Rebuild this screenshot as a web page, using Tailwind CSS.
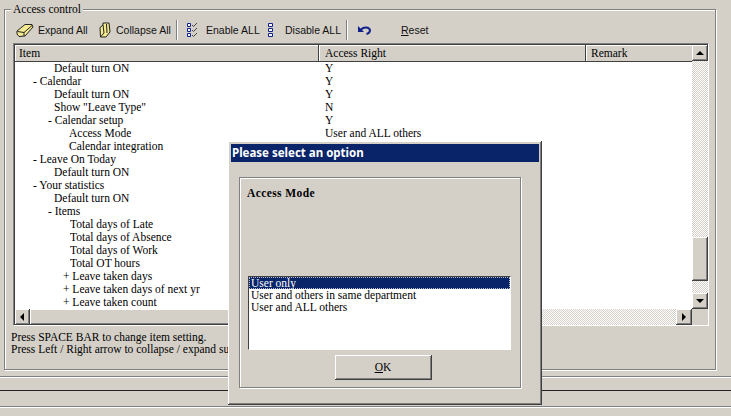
<!DOCTYPE html>
<html lang="en">
<head>
  <meta charset="UTF-8">
  <title>Access control</title>
  <script src="https://cdn.jsdelivr.net/npm/@tailwindcss/browser@4"></script>
</head>
<body class="bg-[#d4d0c8] text-black">
<div class="relative w-[731px] h-[416px] overflow-hidden font-['Liberation_Serif',serif] text-[11.5px] leading-[13px]">

  <!-- Access control group -->
  <div class="pt-[9px] pl-[4px] w-[716px]">
    <div class="relative h-[361px] border border-[#808080] shadow-[1px_1px_0_#fff,inset_1px_1px_0_#fff] pt-[10px] pl-[8px]">
      <span class="absolute left-[6px] -top-[7px] bg-[#d4d0c8] px-[2px]">Access control</span>

      <!-- Toolbar -->
      <div class="relative h-[20px] font-['Liberation_Sans',sans-serif] text-[10.5px] leading-[20px] text-[#111] whitespace-nowrap flex items-center">
        <svg class="ml-[3px] w-[18px] h-[15px]" viewBox="0 0 18 15">
          <path d="M1 8 L9 1.500 L16 1.500 L17 4 L9 13 L3 13.500 L1 11 Z" fill="#f4ea90" stroke="#222"/>
          <path d="M1.500 8.500 L8 9.500 L16 2.500 M8 9.500 L8 13" fill="none" stroke="#222"/>
        </svg>
        <span class="ml-[4px] w-[61px]">Expand All</span>
        <svg class="w-[12px] h-[16px]" viewBox="0 0 12 16">
          <path d="M1 5.500 L4 3 L4 1 L10 1 L11 10 L7 15 L1.500 15 Z" fill="#f4ea90" stroke="#222"/>
          <path d="M4 3 L5 11 L1.500 15 M7.500 2 L8 11" fill="none" stroke="#222"/>
        </svg>
        <span class="ml-[5px] w-[60px]">Collapse All</span>
        <div class="w-[1px] h-[20px] bg-[#808080] shadow-[1px_0_0_#fff]"></div>
        <svg class="ml-[10px] w-[11px] h-[15px]" viewBox="0 0 11 15">
          <path d="M.5 .5h3v3h-3zM.5 5.500h3v3h-3zM.5 10.500h3v3h-3z" fill="#fff" stroke="#10208a"/>
          <path d="M5 2l1.500 1.500L10 0M5 7l1.500 1.500L10 5M5 12l1.500 1.500L10 10" fill="none" stroke="#444"/>
        </svg>
        <span class="ml-[8px] w-[62px]">Enable ALL</span>
        <svg class="w-[5px] h-[15px]" viewBox="0 0 5 15">
          <path d="M.5 .5h4v3h-4zM.5 5.500h4v3h-4zM.5 10.500h4v3h-4z" fill="#fff" stroke="#10208a"/>
        </svg>
        <span class="ml-[12px] w-[61px]">Disable ALL</span>
        <div class="w-[1px] h-[20px] bg-[#808080] shadow-[1px_0_0_#fff]"></div>
        <svg class="ml-[11px] w-[13px] h-[9px]" viewBox="0 0 13 9">
          <path d="M0 0v6h6z" fill="#10208a"/>
          <path d="M3 3.500 C6 .5 11 1 12 4 C12 6 10.500 7.500 8.500 8" fill="none" stroke="#10208a" stroke-width="2"/>
        </svg>
        <span class="ml-[30px]"><span class="underline">R</span>eset</span>
      </div>

      <!-- Tree list -->
      <div class="relative mt-[3px] w-[696px] h-[283px] border border-[#808080] border-r-white border-b-white">
        <div class="relative w-[694px] h-[281px] bg-white border border-[#404040] border-r-0 border-b-0">
          <!-- header -->
          <div class="flex h-[17px] bg-[#d4d0c8] border-b border-[#404040]">
            <div class="w-[304px] pl-[4px] pt-[2px] border-r border-[#404040] shadow-[inset_1px_1px_0_#fff]">Item</div>
            <div class="w-[267px] pl-[6px] pt-[2px] border-r border-[#404040] shadow-[inset_1px_1px_0_#fff]">Access Right</div>
            <div class="w-[106px] pl-[5px] pt-[2px] shadow-[inset_1px_1px_0_#fff]">Remark</div>
          </div>
          <!-- rows -->
          <div class="grid grid-cols-[305px_1fr] auto-rows-[13px]">
            <div class="pl-[39px]">Default turn ON</div><div class="pl-[5px]">Y</div>
            <div class="pl-[18px]">- Calendar</div><div class="pl-[5px]">Y</div>
            <div class="pl-[39px]">Default turn ON</div><div class="pl-[5px]">Y</div>
            <div class="pl-[39px]">Show "Leave Type"</div><div class="pl-[5px]">N</div>
            <div class="pl-[33px]">- Calendar setup</div><div class="pl-[5px]">Y</div>
            <div class="pl-[54px]">Access Mode</div><div class="pl-[5px]">User and ALL others</div>
            <div class="pl-[54px]">Calendar integration</div><div></div>
            <div class="pl-[18px]">- Leave On Today</div><div></div>
            <div class="pl-[39px]">Default turn ON</div><div></div>
            <div class="pl-[18px]">- Your statistics</div><div></div>
            <div class="pl-[39px]">Default turn ON</div><div></div>
            <div class="pl-[33px]">- Items</div><div></div>
            <div class="pl-[55px]">Total days of Late</div><div></div>
            <div class="pl-[55px]">Total days of Absence</div><div></div>
            <div class="pl-[55px]">Total days of Work</div><div></div>
            <div class="pl-[55px]">Total OT hours</div><div></div>
            <div class="pl-[48px]">+ Leave taken days</div><div></div>
            <div class="pl-[48px]">+ Leave taken days of next yr</div><div></div>
            <div class="pl-[48px]">+ Leave taken count</div><div></div>
          </div>

          <!-- vertical scrollbar -->
          <div class="absolute right-0 top-0 bottom-[16px] w-[16px] flex flex-col bg-[repeating-conic-gradient(#fff_0_25%,#d4d0c8_0_50%)] bg-[length:2px_2px]">
            <div class="h-[16px] bg-[#d4d0c8] border-r border-b border-[#404040] shadow-[inset_1px_1px_0_#fff,inset_-1px_-1px_0_#808080] flex items-center justify-center">
              <div class="w-0 h-0 border-x-[4px] border-x-transparent border-b-[4px] border-b-black"></div>
            </div>
            <div class="mt-[176px] h-[44px] bg-[#d4d0c8] border-r border-b border-[#404040] shadow-[inset_1px_1px_0_#fff,inset_-1px_-1px_0_#808080]"></div>
            <div class="mt-auto h-[16px] bg-[#d4d0c8] border-r border-b border-[#404040] shadow-[inset_1px_1px_0_#fff,inset_-1px_-1px_0_#808080] flex items-center justify-center">
              <div class="w-0 h-0 border-x-[4px] border-x-transparent border-t-[4px] border-t-black"></div>
            </div>
          </div>

          <!-- horizontal scrollbar -->
          <div class="absolute left-0 right-[16px] bottom-0 h-[16px] flex bg-[repeating-conic-gradient(#fff_0_25%,#d4d0c8_0_50%)] bg-[length:2px_2px]">
            <div class="w-[15px] bg-[#d4d0c8] border-r border-b border-[#404040] shadow-[inset_1px_1px_0_#fff,inset_-1px_-1px_0_#808080] flex items-center justify-center">
              <div class="w-0 h-0 border-y-[4px] border-y-transparent border-r-[4px] border-r-black"></div>
            </div>
            <div class="w-[500px] bg-[#d4d0c8] border-r border-b border-[#404040] shadow-[inset_1px_1px_0_#fff,inset_-1px_-1px_0_#808080]"></div>
            <div class="ml-auto w-[16px] bg-[#d4d0c8] border-r border-b border-[#404040] shadow-[inset_1px_1px_0_#fff,inset_-1px_-1px_0_#808080] flex items-center justify-center">
              <div class="w-0 h-0 border-y-[4px] border-y-transparent border-l-[4px] border-l-black"></div>
            </div>
          </div>
          <div class="absolute right-0 bottom-0 w-[16px] h-[16px] bg-[#d4d0c8]"></div>
        </div>
      </div>

      <!-- Hint -->
      <div class="mt-[5px] -ml-[2px] leading-[12px]">
        <p>Press SPACE BAR to change item setting.</p>
        <p>Press Left / Right arrow to collapse / expand sub items.</p>
      </div>
    </div>
  </div>

  <!-- Bottom rules -->
  <div class="mt-[6px] h-[2px] border-t border-[#808080] border-b border-b-white"></div>
  <div class="mt-[12px] h-[1px] bg-[#222]"></div>
  <div class="mt-[15px] h-[2px] border-t border-[#808080] border-b border-b-white"></div>

  <!-- Dialog -->
  <div class="absolute left-[228px] top-[141px] w-[314px] h-[264px] bg-[#d4d0c8] border-r border-b border-[#404040] shadow-[inset_1px_1px_0_#fff,inset_-1px_-1px_0_#808080] pt-[3px] pl-[3px] pr-[2px] flex flex-col">
    <div class="h-[18px] bg-[#0a246a] text-white font-['Noto_Sans',sans-serif] font-bold text-[11.5px] leading-[18px] pl-[1px]">Please select an option</div>
    <div class="mt-[15px] ml-[8px] w-[282px] h-[211px] border border-[#808080] shadow-[1px_1px_0_#fff,inset_1px_1px_0_#fff] flex flex-col pt-[9px] pl-[7px]">
      <div class="font-bold tracking-[0.4px]">Access Mode</div>
      <div class="mt-[76px] ml-[1px] w-[263px] h-[74px] bg-white border border-[#404040] border-r-white border-b-white">
        <div class="w-[261px] bg-[#0a246a] text-white h-[12px] leading-[12px] outline outline-dotted outline-1 -outline-offset-1 outline-white/70 pl-[2px]">User only</div>
        <div class="pl-[2px] h-[12px] leading-[12px]">User and others in same department</div>
        <div class="pl-[2px] h-[12px] leading-[12px]">User and ALL others</div>
      </div>
      <div class="mt-[5px] ml-[88px] w-[97px] h-[25px] border-r border-b border-[#404040] shadow-[inset_1px_1px_0_#fff,inset_-1px_-1px_0_#808080] flex items-center justify-center"><span><span class="underline">O</span>K</span></div>
    </div>
  </div>
</div>
</body>
</html>
